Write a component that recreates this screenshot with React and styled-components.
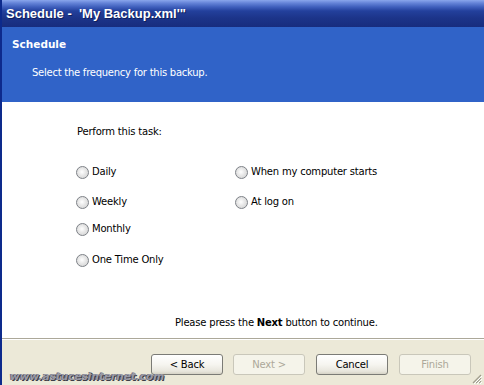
import React from "react";
import styled, { createGlobalStyle } from "styled-components";

const Global = createGlobalStyle`
  html, body { margin: 0; padding: 0; background: #ece9d8; }
  body { font-family: "DejaVu Sans", Tahoma, sans-serif; }
`;

const Window = styled.div`
  position: relative;
  width: 484px;
  height: 385px;
  display: flex;
  flex-direction: column;
  overflow: hidden;
  background: #ece9d8;
  border-left: 2px solid #0d2a8c;
  box-sizing: border-box;
`;

const TitleBar = styled.div`
  height: 27px;
  flex: none;
  display: flex;
  align-items: center;
  padding-left: 4px;
  background: linear-gradient(
    to bottom,
    #8aa6ec 0px,
    #6584d8 3px,
    #3f5fbc 7px,
    #23409c 11px,
    #1c3489 18px,
    #172c7e 27px
  );
  color: #fff;
  font-family: "Liberation Sans", Arial, sans-serif;
  font-weight: bold;
  font-size: 13px;
  white-space: pre;
  text-shadow: 1px 1px 0 #0f1f5c;
`;

const Header = styled.div`
  height: 75px;
  flex: none;
  box-sizing: border-box;
  background: #3063c8;
  color: #fff;
  padding: 10px 0 0 10px;
  font-size: 10px;
  letter-spacing: -0.25px;
`;

const HeaderTitle = styled.div`
  font-weight: bold;
  font-size: 10.5px;
  letter-spacing: 0;
  line-height: 14px;
`;

const HeaderSub = styled.div`
  margin: 15px 0 0 20px;
  line-height: 14px;
`;

const Body = styled.div`
  flex: 1;
  background: #fff;
  display: flex;
  flex-direction: column;
  padding: 23px 0 8px 0;
  border-bottom: 1px solid #aca899;
  font-size: 10px;
  letter-spacing: -0.2px;
  color: #000;
`;

const Prompt = styled.div`
  margin-left: 75px;
  line-height: 14px;
`;

const Options = styled.div`
  display: grid;
  grid-template-columns: 159px 200px;
  margin: 26px 0 0 74px;
`;

const Column = styled.div`
  display: flex;
  flex-direction: column;
`;

const RadioRow = styled.label`
  display: flex;
  align-items: center;
  gap: 3px;
  height: 14px;
  margin-top: ${(p) => p.$mt || 0}px;
  line-height: 14px;
`;

const RadioDot = styled.span`
  width: 11px;
  height: 11px;
  border-radius: 50%;
  border: 1px solid #7d8187;
  background: radial-gradient(circle at 45% 45%, #ffffff 0%, #e6e6e6 45%, #cfcfcf 100%);
  flex: none;
`;

const Spacer = styled.div`
  flex: 1;
`;

const Instruction = styled.div`
  margin-left: 173px;
  line-height: 14px;
  b { font-weight: bold; }
`;

const Footer = styled.div`
  flex: none;
  height: 46px;
  box-sizing: border-box;
  border-top: 1px solid #fff;
  display: flex;
  align-items: flex-start;
  padding: 14px 0 0 149px;
  gap: 10px;
`;

const Button = styled.button`
  width: 72px;
  height: 21px;
  margin-left: ${(p) => p.$ml || 0}px;
  padding: 0;
  box-sizing: border-box;
  border-radius: 3px;
  font-family: "DejaVu Sans", Tahoma, sans-serif;
  font-size: 10px;
  letter-spacing: -0.2px;
  border: 1px solid ${(p) => (p.disabled ? "#c9c7ba" : "#7b7b76")};
  color: ${(p) => (p.disabled ? "#aca899" : "#000")};
  background: ${(p) =>
    p.disabled
      ? "#f5f4ea"
      : "linear-gradient(to bottom, #ffffff 0%, #f6f5f0 50%, #e8e6dd 85%, #d6d3c6 100%)"};
`;

const Watermark = styled.div`
  position: absolute;
  left: 8px;
  bottom: 3px;
  font-family: "DejaVu Sans", sans-serif;
  font-style: italic;
  font-weight: bold;
  font-size: 10.5px;
  line-height: 11px;
  color: #9a9aa6;
  text-shadow: 1px 1px 0 #3c3c46, -1px 0 0 #6b6b78;
`;

const Grip = styled.svg`
  position: absolute;
  right: 2px;
  bottom: 1px;
`;

export default function App() {
  return (
    <>
      <Global />
      <Window>
        <TitleBar>{"Schedule -  'My Backup.xml'\""}</TitleBar>
        <Header>
          <HeaderTitle>Schedule</HeaderTitle>
          <HeaderSub>Select the frequency for this backup.</HeaderSub>
        </Header>
        <Body>
          <Prompt>Perform this task:</Prompt>
          <Options>
            <Column>
              <RadioRow><RadioDot />Daily</RadioRow>
              <RadioRow $mt={16}><RadioDot />Weekly</RadioRow>
              <RadioRow $mt={13}><RadioDot />Monthly</RadioRow>
              <RadioRow $mt={17}><RadioDot />One Time Only</RadioRow>
            </Column>
            <Column>
              <RadioRow><RadioDot />When my computer starts</RadioRow>
              <RadioRow $mt={16}><RadioDot />At log on</RadioRow>
            </Column>
          </Options>
          <Spacer />
          <Instruction>
            Please press the <b>Next</b> button to continue.
          </Instruction>
        </Body>
        <Footer>
          <Button>&lt; Back</Button>
          <Button disabled>Next &gt;</Button>
          <Button $ml={1}>Cancel</Button>
          <Button disabled $ml={1}>Finish</Button>
        </Footer>
        <Watermark>www.astucesinternet.com</Watermark>
        <Grip width="11" height="11" viewBox="0 0 11 11">
          <path d="M10 2 L2 10 M10 5 L5 10 M10 8 L8 10" stroke="#a19e8e" strokeWidth="1.2" />
          <path d="M11 3 L3 11 M11 6 L6 11 M11 9 L9 11" stroke="#fff" strokeWidth="1" />
        </Grip>
      </Window>
    </>
  );
}
